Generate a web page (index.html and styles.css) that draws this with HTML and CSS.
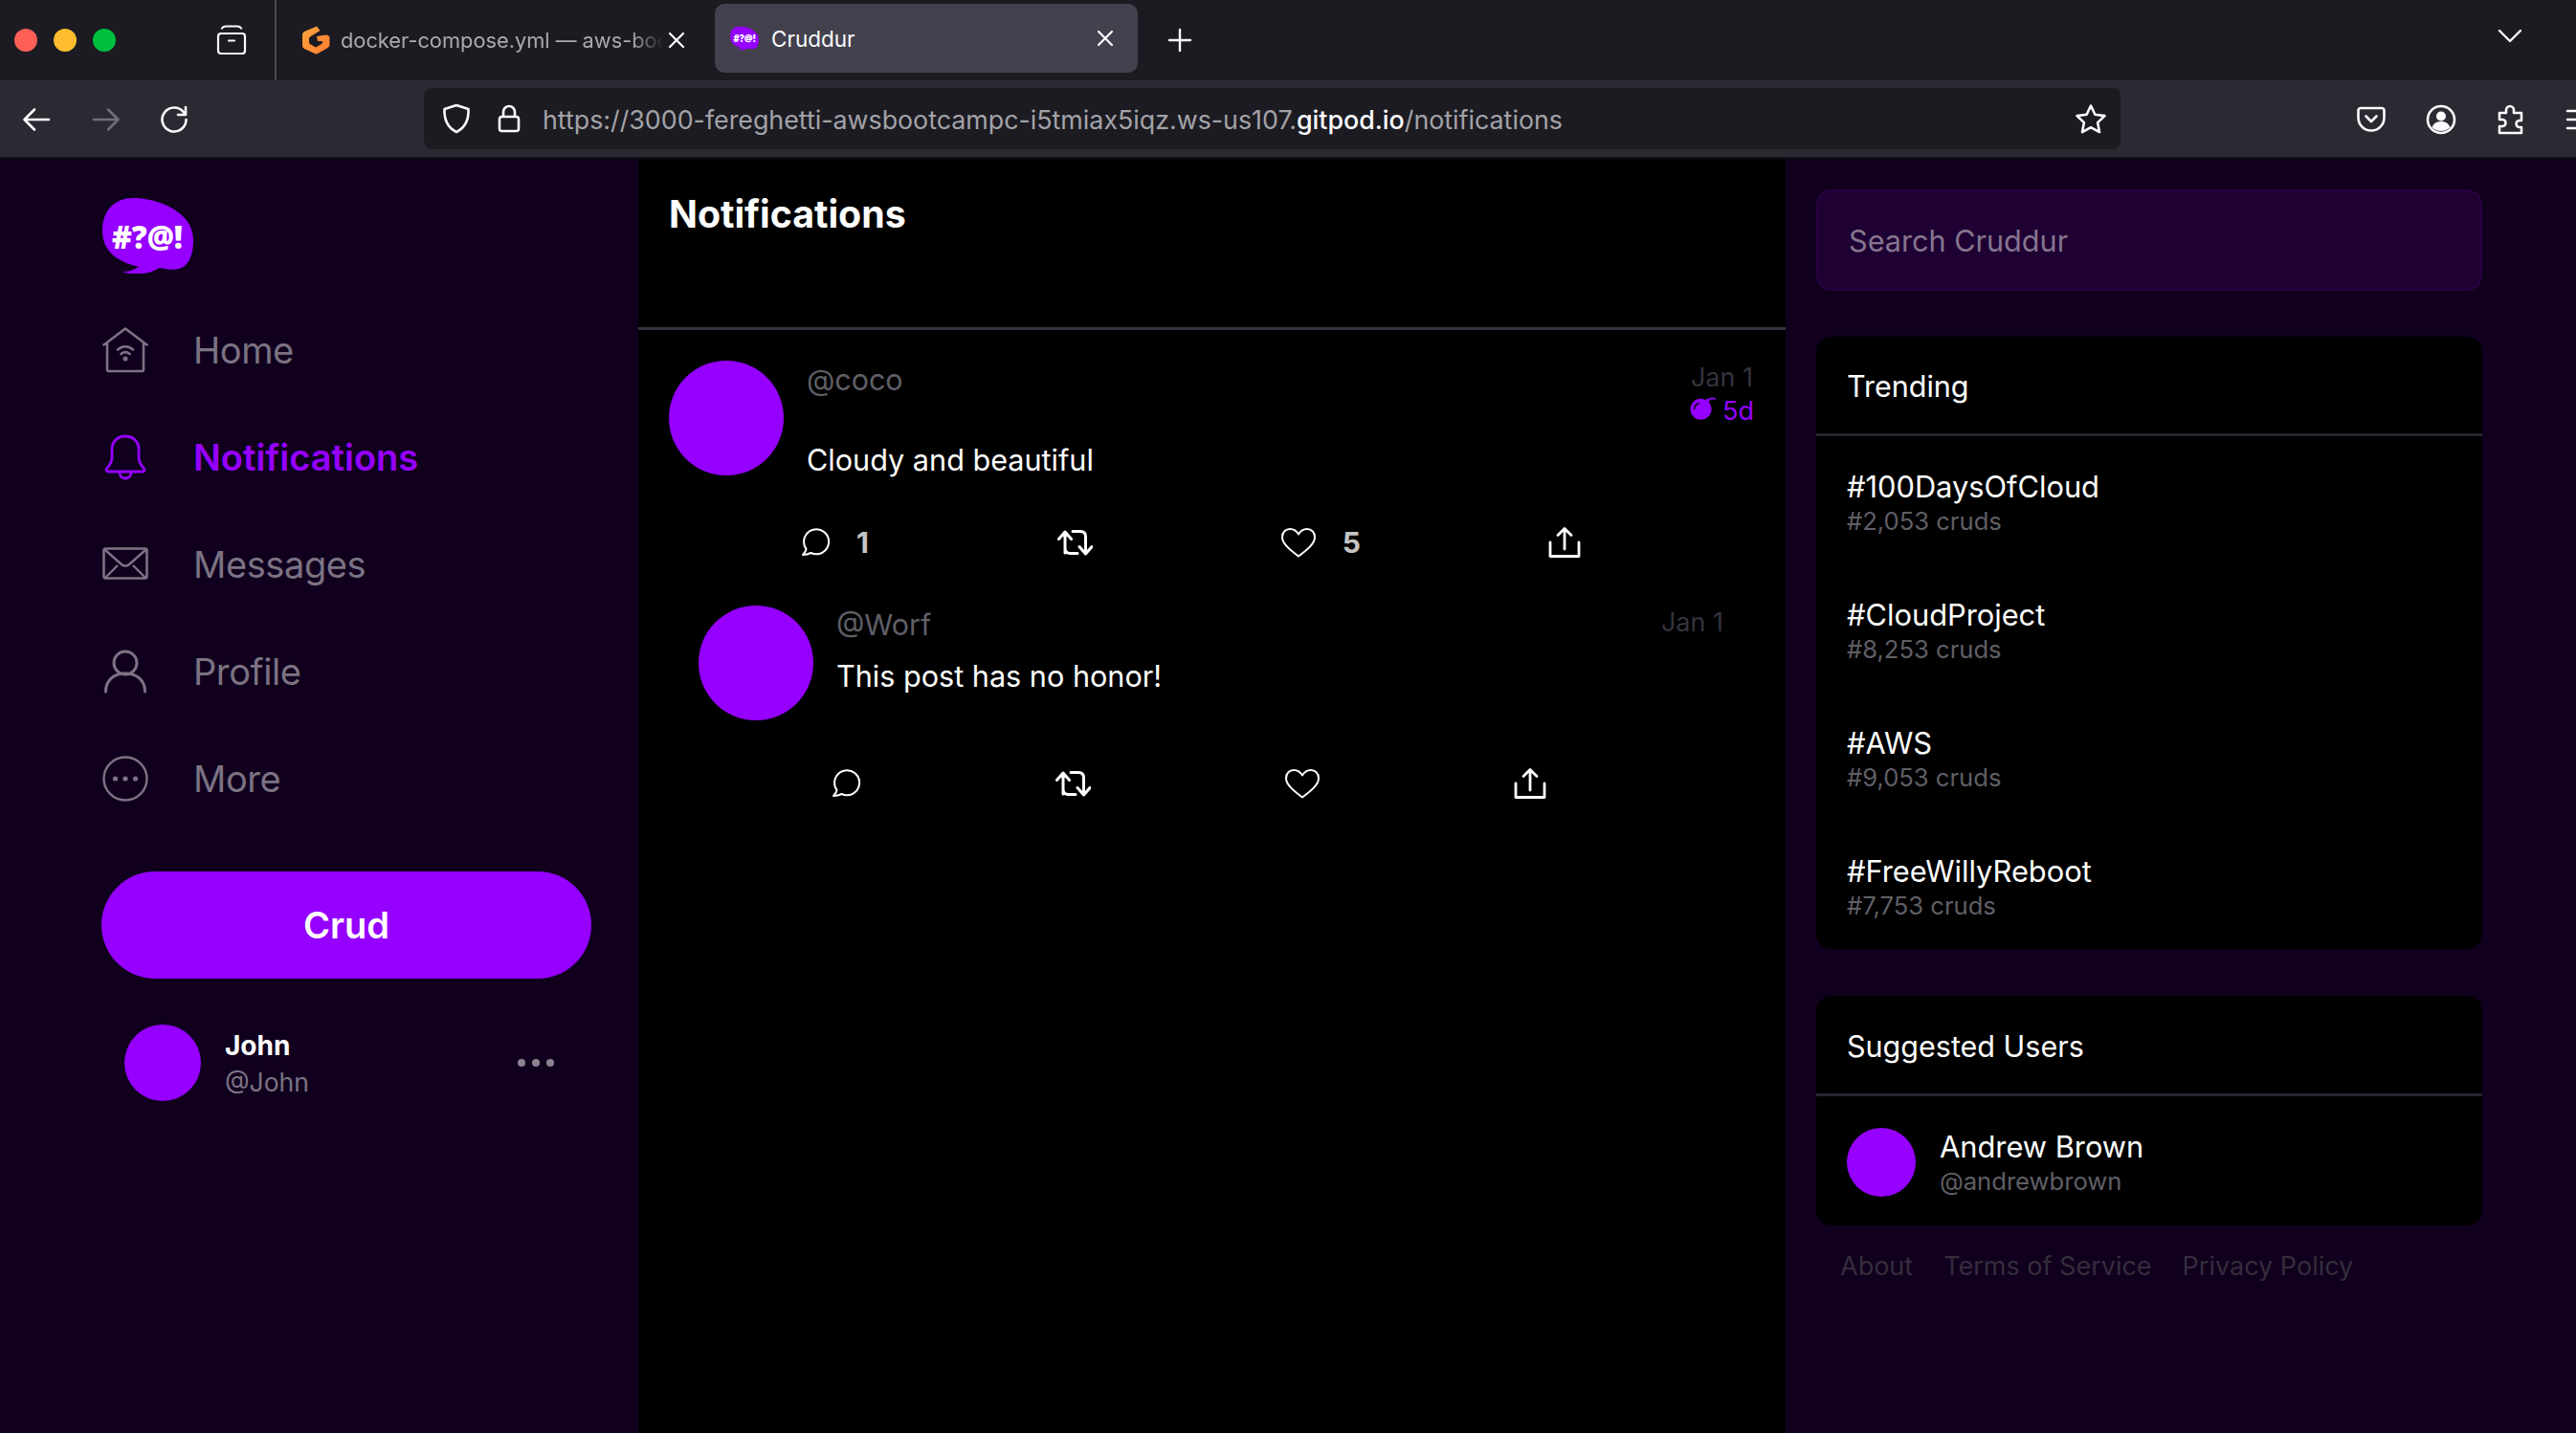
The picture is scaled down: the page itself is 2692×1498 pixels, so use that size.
FILE: index.html
```html
<!DOCTYPE html>
<html lang="en">
<head>
    <meta charset="UTF-8">
    <meta name="viewport" content="width=device-width, initial-scale=1.0">
    <title>Cruddur</title>
    <link rel="stylesheet" href="styles.css">
</head>
<body>
    <svg class="defs" width="0" height="0">
        <defs>
            <linearGradient id="g-orange" x1="0" y1="0" x2="1" y2="1">
                <stop offset="0" stop-color="#ffa73d"/>
                <stop offset="1" stop-color="#ff7a2f"/>
            </linearGradient>
        </defs>
        <symbol id="i-reply" viewBox="0 0 32 32"><path d="M6.500 22.800A13 13 0 1 1 11.500 27C9 28.200 6 29 3 29c2-2 3.300-3.800 3.500-6.200z" fill="none" stroke="currentColor" stroke-width="2" stroke-linejoin="round"/></symbol>
        <symbol id="i-retweet" viewBox="0 0 38 32"><path d="M9 27V7M2.500 12.500 9 5l6.500 7.500M9 22c0 3.500 2 5.500 5.500 5.500H22M17 4.500h8c3.500 0 5.500 2 5.500 5.500v18M24 20.500l6.500 7.500 6.500-7.500" fill="none" stroke="currentColor" stroke-width="3" stroke-linecap="round" stroke-linejoin="round"/></symbol>
        <symbol id="i-heart" viewBox="0 0 38 32"><path d="M19 30.500C9 23 2 17 2 10.500 2 5.300 5.700 2 10 2c3.700 0 7 2 9 5.500C21 4 24.300 2 28 2c4.300 0 8 3.300 8 8.500 0 6.500-7 12.500-17 20z" fill="none" stroke="currentColor" stroke-width="2" stroke-linejoin="round"/></symbol>
        <symbol id="i-share" viewBox="0 0 34 34"><path d="M17 24V3M10 9.500 17 2.500l7 7M2 17v14.500h30V17" fill="none" stroke="currentColor" stroke-width="2.800" stroke-linecap="round" stroke-linejoin="round"/></symbol>
        <symbol id="i-bubble" viewBox="0 0 95 79"><path d="M0 34C0 12 14 0 32 0c18 0 40 7 52 19 8 8 11 16 11 26 0 11-3 21-9 26-5 4-13 5-26 2-6 3-12 6-20 6-7 1-13 0-19-2 7 0 12-2 17-5C13 66 0 54 0 34z" fill="#9500ff"/></symbol>
    </svg>

    <header class="tabbar">
        <div class="lights">
            <span class="light red"></span>
            <span class="light yellow"></span>
            <span class="light green"></span>
        </div>
        <svg class="tabs-icon" viewBox="0 0 32 32" width="32" height="32"><path d="M6 3.500C7 2 8 1.500 10 1.500h12c2 0 3 .5 4 2M5 9h22a3 3 0 0 1 3 3v15a3 3 0 0 1-3 3H5a3 3 0 0 1-3-3V12a3 3 0 0 1 3-3zM13 16.500h6" fill="none" stroke="#fbfbfe" stroke-width="2.200" stroke-linecap="round"/></svg>
        <div class="tab-sep"></div>
        <div class="tab">
            <svg class="tab-fav" viewBox="0 0 30 32" width="30" height="32"><path d="M16 1.500 19.500 6 9 12.500a2 2 0 0 0-1 1.700v4a2 2 0 0 0 1 1.700l5 3a2 2 0 0 0 2 0l5-3a2 2 0 0 0 1-1.700v-1.200h-5l-1-5 9.500-1.500c2 0 4 1 4 3v7c0 1.500-.7 2.700-2 3.500l-10 5.800a4 4 0 0 1-4 0L3 25c-1.300-.8-2-2-2-3.500v-11c0-1.500.7-2.700 2-3.500z" fill="url(#g-orange)"/></svg>
            <span class="tab-title">docker-compose.yml — aws-boo</span>
            <svg class="tab-close" viewBox="0 0 18 18" width="18" height="18"><path d="M2 2l14 14M16 2L2 16" stroke="#fbfbfe" stroke-width="2.200" stroke-linecap="round"/></svg>
        </div>
        <div class="tab tab-active">
            <svg class="tab-fav-small" viewBox="0 0 95 79" width="30" height="26"><use href="#i-bubble"/><text x="47" y="53" class="logo-text" textLength="74" lengthAdjust="spacingAndGlyphs">#?@!</text></svg>
            <span class="tab-title">Cruddur</span>
            <svg class="tab-close" viewBox="0 0 18 18" width="18" height="18"><path d="M2 2l14 14M16 2L2 16" stroke="#fbfbfe" stroke-width="2.200" stroke-linecap="round"/></svg>
        </div>
        <svg class="tab-plus" viewBox="0 0 26 26" width="26" height="26"><path d="M13 2v22M2 13h22" stroke="#fbfbfe" stroke-width="2.400" stroke-linecap="round"/></svg>
        <svg class="tab-list" viewBox="0 0 26 16" width="26" height="16"><path d="M2 2l11 11L24 2" fill="none" stroke="#fbfbfe" stroke-width="2.400" stroke-linecap="round" stroke-linejoin="round"/></svg>
    </header>

    <div class="toolbar">
        <svg class="tool back" viewBox="0 0 30 28" width="30" height="28"><path d="M28 14H3M13 3.500 2.500 14 13 24.500" fill="none" stroke="#fbfbfe" stroke-width="2.600" stroke-linecap="round" stroke-linejoin="round"/></svg>
        <svg class="tool forward" viewBox="0 0 30 28" width="30" height="28"><path d="M2 14h25M17 3.500 27.500 14 17 24.500" fill="none" stroke="#6f6f76" stroke-width="2.600" stroke-linecap="round" stroke-linejoin="round"/></svg>
        <svg class="tool reload" viewBox="0 0 30 30" width="30" height="30"><path d="M25 7.500A12.500 12.500 0 1 0 27.500 15M27 2v8h-8" fill="none" stroke="#fbfbfe" stroke-width="2.600" stroke-linecap="round" stroke-linejoin="round"/></svg>
        <div class="urlbar">
            <svg class="url-shield" viewBox="0 0 30 32" width="30" height="32"><path d="M15 2 27.500 6c.5 11-2.500 19-12.500 24C5 25 2 17 2.500 6z" fill="none" stroke="#fbfbfe" stroke-width="2.600" stroke-linejoin="round"/></svg>
            <svg class="url-lock" viewBox="0 0 24 30" width="24" height="30"><path d="M6 13V8a6 6 0 0 1 12 0v5M4.500 13h15A2.500 2.500 0 0 1 22 15.500v10a2.500 2.500 0 0 1-2.500 2.500h-15A2.500 2.500 0 0 1 2 25.500v-10A2.500 2.500 0 0 1 4.500 13z" fill="none" stroke="#fbfbfe" stroke-width="2.600"/></svg>
            <span class="url-text">https://3000-fereghetti-awsbootcampc-i5tmiax5iqz.ws-us107.<b>gitpod.io</b>/notifications</span>
            <svg class="url-star" viewBox="0 0 34 32" width="34" height="32"><path d="M17 2.500l4.400 9.300 10.100 1.300-7.400 7 1.900 10L17 25.200 8 30.100l1.900-10-7.400-7 10.100-1.300z" fill="none" stroke="#fbfbfe" stroke-width="2.600" stroke-linejoin="round"/></svg>
        </div>
        <svg class="tool pocket" viewBox="0 0 30 30" width="30" height="30"><path d="M4 3h22a2.500 2.500 0 0 1 2.500 2.500V13a13.500 13.500 0 0 1-27 0V5.500A2.500 2.500 0 0 1 4 3zM9.500 11.500 15 17l5.500-5.500" fill="none" stroke="#fbfbfe" stroke-width="2.600" stroke-linecap="round" stroke-linejoin="round"/></svg>
        <svg class="tool account" viewBox="0 0 32 32" width="32" height="32"><circle cx="16" cy="16" r="14" fill="none" stroke="#fbfbfe" stroke-width="2.600"/><circle cx="16" cy="12.500" r="5" fill="#fbfbfe"/><path d="M6.500 24c2-4.500 5.500-6 9.500-6s7.500 1.500 9.500 6c-2.500 2.500-5.800 4-9.500 4s-7-1.500-9.500-4z" fill="#fbfbfe"/></svg>
        <svg class="tool extensions" viewBox="0 0 30 32" width="30" height="32"><path d="M3 9h7V6a4 4 0 0 1 8 0v3h8v8h-2a3.500 3.500 0 0 0 0 7h2v6H3v-7h3a3.500 3.500 0 0 0 0-7H3z" fill="none" stroke="#fbfbfe" stroke-width="2.600" stroke-linejoin="round"/></svg>
        <svg class="tool menu" viewBox="0 0 28 24" width="28" height="24"><path d="M2 3h24M2 12h24M2 21h24" stroke="#fbfbfe" stroke-width="2.600" stroke-linecap="round"/></svg>
    </div>

    <div class="page">
        <nav class="sidebar">
            <svg class="logo" viewBox="0 0 95 79" width="95" height="79"><use href="#i-bubble"/><text x="47" y="53" class="logo-text" textLength="74" lengthAdjust="spacingAndGlyphs">#?@!</text></svg>

            <a class="nav-item">
                <svg viewBox="0 0 48 48" width="48" height="48"><path d="M1.500 18.500 24 1.500l22.500 17M5 16v28.500a1.500 1.500 0 0 0 1.500 1.500h35a1.500 1.500 0 0 0 1.500-1.500V16M16 23.500c5-4.200 11-4.200 16 0M19.500 28c3-2.400 6-2.400 9 0" fill="none" stroke="currentColor" stroke-width="2.600" stroke-linecap="round" stroke-linejoin="round"/><circle cx="24" cy="33" r="2.500" fill="currentColor"/></svg>
                <span>Home</span>
            </a>
            <a class="nav-item nav-active">
                <svg viewBox="0 0 48 48" width="48" height="48"><path d="M6 39c-2 0-2.500-2-1.500-3.200C7 33 10 30 10 24V16C10 7.500 16 2 24 2s14 5.500 14 14v8c0 6 3 9 5.500 11.800 1 1.200.5 3.200-1.500 3.200zM18 40c0 8 12 8 12 0" fill="none" stroke="currentColor" stroke-width="2.800" stroke-linejoin="round"/></svg>
                <span>Notifications</span>
            </a>
            <a class="nav-item">
                <svg viewBox="0 0 48 36" width="48" height="48"><rect x="1.500" y="1.500" width="45" height="31" rx="2" fill="none" stroke="currentColor" stroke-width="2.600"/><path d="M3 3l17 15c2.500 2 5.500 2 8 0L45 3M3 32l13-13M45 32 32 19" fill="none" stroke="currentColor" stroke-width="2.400"/></svg>
                <span>Messages</span>
            </a>
            <a class="nav-item">
                <svg viewBox="0 0 48 48" width="48" height="48"><circle cx="24" cy="15" r="12" fill="none" stroke="currentColor" stroke-width="3"/><path d="M3.500 45C3.500 34 11 26 24 26s20.500 8 20.500 19" fill="none" stroke="currentColor" stroke-width="3" stroke-linecap="round"/></svg>
                <span>Profile</span>
            </a>
            <a class="nav-item">
                <svg viewBox="0 0 48 48" width="48" height="48"><circle cx="24" cy="24" r="22.500" fill="none" stroke="currentColor" stroke-width="2.400"/><circle cx="13.500" cy="24" r="2.600" fill="currentColor"/><circle cx="24" cy="24" r="2.600" fill="currentColor"/><circle cx="34.500" cy="24" r="2.600" fill="currentColor"/></svg>
                <span>More</span>
            </a>

            <button class="crud-btn">Crud</button>

            <div class="me">
                <div class="avatar avatar-me"></div>
                <div class="me-names">
                    <div class="me-name">John</div>
                    <div class="me-handle">@John</div>
                </div>
                <div class="me-dots"><i></i><i></i><i></i></div>
            </div>
        </nav>

        <main class="feed">
            <div class="feed-title">Notifications</div>

            <div class="post">
                <div class="activity">
                    <div class="avatar"></div>
                    <div class="activity-body">
                        <div class="activity-head">
                            <span class="handle">@coco</span>
                            <div class="times">
                                <div class="time-created">Jan 1</div>
                                <div class="time-expires">
                                    <svg viewBox="0 0 28 24" width="28" height="24"><circle cx="11.500" cy="12.800" r="11" fill="#9500ff"/><path d="M17 5l3-2.500" stroke="#9500ff" stroke-width="3.400"/><path d="M20 2.500c2-1.500 4-1.500 7-.5" fill="none" stroke="#9500ff" stroke-width="1.600"/><path d="M4.500 13c0-3.500 2-5.500 5-6.500" fill="none" stroke="#000" stroke-width="1.500"/></svg>
                                    <span>5d</span>
                                </div>
                            </div>
                        </div>
                        <div class="message">Cloudy and beautiful</div>
                        <div class="actions">
                            <div class="action"><svg width="32" height="32"><use href="#i-reply"/></svg><span class="count">1</span></div>
                            <div class="action"><svg width="38" height="32"><use href="#i-retweet"/></svg></div>
                            <div class="action"><svg width="38" height="32"><use href="#i-heart"/></svg><span class="count">5</span></div>
                            <div class="action"><svg width="34" height="34"><use href="#i-share"/></svg></div>
                        </div>
                    </div>
                </div>

                <div class="activity reply">
                    <div class="avatar"></div>
                    <div class="activity-body">
                        <div class="activity-head">
                            <span class="handle">@Worf</span>
                            <div class="times">
                                <div class="time-created">Jan 1</div>
                            </div>
                        </div>
                        <div class="message">This post has no honor!</div>
                        <div class="actions">
                            <div class="action"><svg width="32" height="32"><use href="#i-reply"/></svg></div>
                            <div class="action"><svg width="38" height="32"><use href="#i-retweet"/></svg></div>
                            <div class="action"><svg width="38" height="32"><use href="#i-heart"/></svg></div>
                            <div class="action"><svg width="34" height="34"><use href="#i-share"/></svg></div>
                        </div>
                    </div>
                </div>
            </div>
        </main>

        <aside class="rightbar">
            <div class="search">Search Cruddur</div>

            <section class="card">
                <div class="card-title">Trending</div>
                <div class="trend"><div class="trend-name">#100DaysOfCloud</div><div class="trend-count">#2,053 cruds</div></div>
                <div class="trend"><div class="trend-name">#CloudProject</div><div class="trend-count">#8,253 cruds</div></div>
                <div class="trend"><div class="trend-name">#AWS</div><div class="trend-count">#9,053 cruds</div></div>
                <div class="trend"><div class="trend-name">#FreeWillyReboot</div><div class="trend-count">#7,753 cruds</div></div>
            </section>

            <section class="card card-users">
                <div class="card-title">Suggested Users</div>
                <div class="suggested">
                    <div class="avatar avatar-small"></div>
                    <div class="suggested-names">
                        <div class="trend-name">Andrew Brown</div>
                        <div class="trend-count">@andrewbrown</div>
                    </div>
                </div>
            </section>

            <footer class="links">
                <a>About</a>
                <a>Terms of Service</a>
                <a>Privacy Policy</a>
            </footer>
        </aside>
    </div>
</body>
</html>
```

FILE: styles.css
```css
* {
    box-sizing: border-box;
}
html, body {
    margin: 0;
    height: 1498px;
    overflow: hidden;
    background: #10001e;
    font-family: Inter, "Liberation Sans", sans-serif;
    color: #fff;
}
.defs {
    position: absolute;
}
svg {
    display: block;
    flex: none;
}

/* browser chrome */
.tabbar {
    height: 84px;
    background: #1c1b22;
    display: flex;
    align-items: center;
}
.lights {
    display: flex;
    gap: 17px;
    margin-left: 15px;
}
.light {
    width: 24px;
    height: 24px;
    border-radius: 50%;
}
.red { background: #ff5f57; }
.yellow { background: #febc2e; }
.green { background: #00c13f; }
.tabs-icon {
    margin-left: 105px;
}
.tab-sep {
    width: 2px;
    height: 84px;
    background: #4a4a52;
    margin-left: 29px;
}
.tab {
    width: 415px;
    height: 72px;
    margin-left: 26px;
    display: flex;
    align-items: center;
    font-size: 21.8px;
    color: #a9a9ae;
}
.tab-fav {
    margin-right: 11px;
}
.tab-fav-small {
    margin-right: 13px;
}
.tab-title {
    width: 345px;
    margin-right: -4px;
    white-space: nowrap;
    overflow: hidden;
    -webkit-mask-image: linear-gradient(to right, #000 88%, transparent 98%);
    mask-image: linear-gradient(to right, #000 88%, transparent 98%);
}
.tab-close {
    margin-left: 1px;
}
.tab-active {
    width: 442px;
    margin-left: 17px;
    padding-left: 16px;
    background: #42414d;
    border-radius: 10px;
    color: #fbfbfe;
    margin-top: -4px;
    font-size: 22.5px;
}
.tab-active .tab-title {
    width: 335px;
    margin-right: 0;
    -webkit-mask-image: none;
    mask-image: none;
}
.tab-active .tab-close {
    margin-left: 5px;
}
.tab-plus {
    margin-left: 31px;
}
.tab-list {
    margin-left: auto;
    margin-right: 56px;
    margin-top: -8px;
}

.toolbar {
    height: 80px;
    background: #2b2a33;
    display: flex;
    align-items: center;
    overflow: hidden;
}
.tool {
    margin-top: 2px;
}
.back { margin-left: 23px; }
.forward { margin-left: 43px; }
.reload { margin-left: 41px; }
.urlbar {
    flex: none;
    width: 1773px;
    height: 64px;
    margin-left: 246px;
    background: #1c1b22;
    border-radius: 8px;
    display: flex;
    align-items: center;
    padding-left: 19px;
    font-size: 26.8px;
    color: #a3a3a8;
}
.url-lock {
    margin-left: 28px;
}
.url-text {
    margin: 2px 0 0 23px;
    white-space: nowrap;
}
.url-text b {
    font-weight: 500;
    color: #fbfbfe;
}
.url-star {
    margin-left: auto;
    margin-right: 14px;
}
.pocket { margin-left: 247px; }
.account { margin-left: 42px; }
.extensions { margin-left: 42px; }
.menu { margin-left: 42px; }

/* app */
.page {
    height: 1334px;
    border-top: 2px solid #111116;
    display: grid;
    grid-template-columns: 667px 1199px 1fr;
}

.sidebar {
    padding: 41px 0 0 106px;
}
.logo {
    margin-bottom: 24px;
    margin-left: 1px;
}
.logo-text {
    font-family: "Open Sans", sans-serif;
    font-size: 34px;
    font-weight: 800;
    fill: #fff;
    text-anchor: middle;
}
.nav-item {
    display: flex;
    align-items: center;
    height: 112px;
    font-size: 38px;
    letter-spacing: -0.4px;
    color: #7b7383;
    gap: 47px;
}
.nav-item svg {
    margin-left: 1px;
}
.nav-active {
    color: #9500ff;
    font-weight: 600;
    letter-spacing: 0;
}
.crud-btn {
    display: block;
    width: 512px;
    height: 112px;
    margin-top: 41px;
    border: 0;
    border-radius: 56px;
    background: #9500ff;
    color: #fff;
    font: 600 38px Inter, sans-serif;
}
.me {
    display: flex;
    align-items: center;
    width: 449px;
    margin: 48px 0 0 24px;
}
.avatar {
    width: 120px;
    height: 120px;
    border-radius: 50%;
    background: #9500ff;
    flex: none;
}
.avatar-me {
    width: 80px;
    height: 80px;
}
.me-names {
    margin-left: 25px;
}
.me-name {
    font-size: 28px;
    font-weight: 700;
    line-height: 40px;
}
.me-handle {
    font-size: 26.5px;
    line-height: 36px;
    color: #7b7383;
}
.me-dots {
    margin-left: auto;
    display: flex;
    gap: 7px;
}
.me-dots i {
    width: 8px;
    height: 8px;
    border-radius: 50%;
    background: #8a8391;
}

.feed {
    background: #000;
}
.feed-title {
    height: 179px;
    border-bottom: 3px solid #34343e;
    padding: 34px 0 0 32px;
    font-size: 39.3px;
    line-height: 48px;
    font-weight: 700;
}
.post {
    padding: 32px 34px 0 32px;
}
.activity {
    display: flex;
}
.activity-body {
    flex: 1;
    margin-left: 24px;
}
.activity-head {
    display: flex;
    justify-content: space-between;
    height: 84px;
}
.handle {
    font-size: 30.4px;
    line-height: 40px;
    color: #5f5f66;
}
.times {
    text-align: right;
    font-size: 27px;
    color: #33343f;
}
.time-created {
    line-height: 36px;
}
.time-expires {
    display: flex;
    justify-content: flex-end;
    align-items: center;
    gap: 6px;
    margin-right: -1px;
    line-height: 34px;
    color: #9500ff;
    font-size: 27px;
}
.time-expires svg {
    margin-top: -6px;
}
.message {
    font-size: 30.6px;
    line-height: 40px;
}
.actions {
    display: flex;
    justify-content: space-between;
    align-items: center;
    height: 44px;
    margin: 44px 180px 0 -7px;
}
.action {
    display: flex;
    align-items: center;
    gap: 27px;
    color: #fff;
}
.count {
    font-size: 30px;
    font-weight: 700;
    color: #c4c4c4;
}
.reply {
    margin: 44px 31px 0;
}
.reply .activity-head {
    height: 54px;
}
.reply .actions {
    margin: 70px 185px 0 -6px;
}

.rightbar {
    padding: 32px 98px 0 32px;
}
.search {
    height: 106px;
    padding-left: 32px;
    display: flex;
    align-items: center;
    background: #1f0033;
    border: 2px solid #290040;
    border-radius: 16px;
    font-size: 30.6px;
    color: #85768f;
}
.card {
    margin-top: 48px;
    background: #000;
    border-radius: 16px;
    height: 640px;
}
.card-users {
    height: 240px;
    margin-top: 49px;
}
.card-title {
    height: 104px;
    padding: 2px 0 0 32px;
    display: flex;
    align-items: center;
    border-bottom: 3px solid #26262f;
    font-size: 30.5px;
}
.card-users .card-title {
    height: 105px;
}
.trend {
    height: 134px;
    padding: 34px 0 0 32px;
}
.trend-name {
    font-size: 30.8px;
    line-height: 38px;
}
.trend-count {
    font-size: 25.6px;
    line-height: 34px;
    color: #5f5f66;
}
.suggested {
    display: flex;
    align-items: center;
    padding: 32px 0 0 32px;
    gap: 25px;
}
.suggested-names {
    padding-top: 2px;
}
.avatar-small {
    width: 72px;
    height: 72px;
}
.links {
    display: flex;
    gap: 32px;
    margin: 25px 0 0 25px;
    font-size: 27px;
    line-height: 36px;
    color: #342d3c;
}
```
